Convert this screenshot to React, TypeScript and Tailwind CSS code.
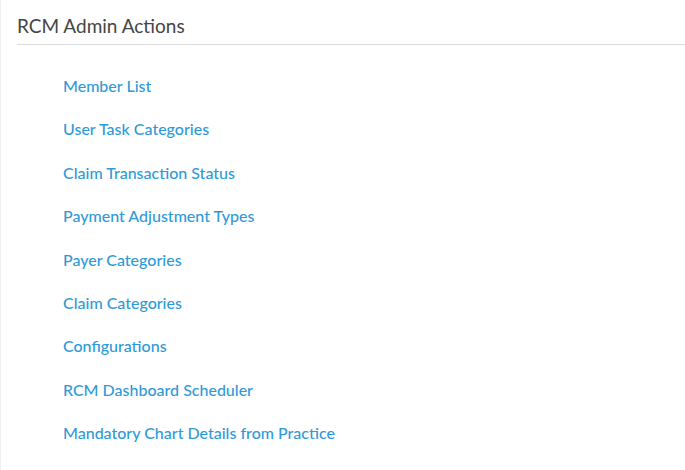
const links = [
  "Member List",
  "User Task Categories",
  "Claim Transaction Status",
  "Payment Adjustment Types",
  "Payer Categories",
  "Claim Categories",
  "Configurations",
  "RCM Dashboard Scheduler",
  "Mandatory Chart Details from Practice",
];

export default function App() {
  return (
    <div className="h-[470px] w-[685px] bg-white border-l border-[#f0f0f0] font-['Lato',sans-serif]">
      <div className="pl-[16px]">
        <h2 className="pt-[15px] pb-[7px] text-[19px] leading-[22px] text-[#454545] border-b border-[#dcdcdc]">
          RCM Admin Actions
        </h2>
      </div>
      <ul className="pl-[62px] pt-[32px] flex flex-col gap-[25.4px]">
        {links.map((l) => (
          <li key={l} className="leading-[18px]">
            <a href="#" className="text-[16px] leading-[18px] font-medium text-[#2f9ad8]">
              {l}
            </a>
          </li>
        ))}
      </ul>
    </div>
  );
}
